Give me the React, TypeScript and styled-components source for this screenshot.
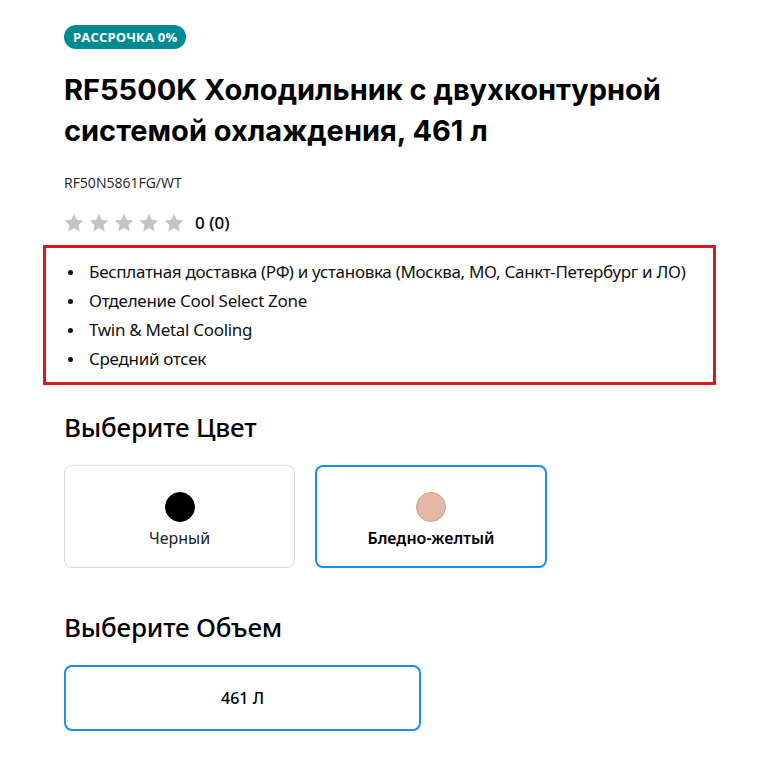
import styled, { createGlobalStyle } from 'styled-components';

const GlobalStyle = createGlobalStyle`
  html, body {
    margin: 0;
    padding: 0;
    background: #fff;
  }
  body {
    font-family: 'Open Sans', 'Noto Sans', sans-serif;
    color: #000;
  }
`;

const Page = styled.main`
  display: flex;
  flex-direction: column;
  align-items: flex-start;
  padding: 25px 66px 40px 64px;
  width: 782px;
  box-sizing: border-box;
`;

const Badge = styled.span`
  display: inline-flex;
  align-items: center;
  height: 24px;
  padding: 0 9px;
  border-radius: 12px;
  background: #008b94;
  color: #fff;
  font-family: 'Open Sans', sans-serif;
  font-weight: 700;
  font-size: 13px;
  letter-spacing: 0.2px;
`;

const Title = styled.h1`
  margin: 20px 0 0;
  font-family: 'Inter', 'Noto Sans', sans-serif;
  font-weight: 700;
  font-size: 29px;
  line-height: 41px;
  letter-spacing: 0;
`;

const Model = styled.div`
  margin-top: 22px;
  font-family: 'Open Sans', sans-serif;
  font-size: 14px;
  color: #222;
`;

const Rating = styled.div`
  display: flex;
  align-items: center;
  gap: 5px;
  margin-top: 19px;
`;

const Score = styled.span`
  margin-left: 6px;
  font-family: 'Noto Sans', sans-serif;
  font-weight: 500;
  font-size: 17px;
`;

const Highlights = styled.ul`
  align-self: stretch;
  margin: 11px 0 0 -21px;
  padding: 9px 20px 9px 39px;
  border: 3px solid #da1a1a;
  list-style: disc;
  font-family: 'Noto Sans', sans-serif;
  font-size: 17px;
  line-height: 29px;
  color: #111;
  letter-spacing: -0.3px;
`;

const Item = styled.li`
  padding-left: 4px;
  &::marker {
    font-size: 14px;
  }
`;

const SectionTitle = styled.h2<{ $gap: number }>`
  margin: ${p => p.$gap}px 0 0;
  font-family: 'Noto Sans', sans-serif;
  font-weight: 500;
  font-size: 26px;
  line-height: 34px;
  letter-spacing: -0.2px;
`;

const Options = styled.div`
  display: flex;
  gap: 20px;
  margin-top: 21px;
`;

const Option = styled.button<{ $selected?: boolean; $width: number; $height: number; $weight: number }>`
  display: flex;
  flex-direction: column;
  align-items: center;
  justify-content: center;
  gap: 5px;
  width: ${p => p.$width}px;
  height: ${p => p.$height}px;
  box-sizing: border-box;
  background: #fff;
  border: ${p => (p.$selected ? '2px solid #1a8cff' : '1px solid #dcdcdc')};
  border-radius: 8px;
  padding: 0;
  font-family: 'Noto Sans', sans-serif;
  font-size: 16px;
  font-weight: ${p => p.$weight};
  color: ${p => (p.$selected ? '#000' : '#222')};
  cursor: pointer;
`;

const Swatch = styled.span<{ $color: string; $edge: string }>`
  width: 30px;
  height: 30px;
  margin-top: 7px;
  border-radius: 50%;
  background: ${p => p.$color};
  border: 1px solid ${p => p.$edge};
  box-sizing: border-box;
`;

const Star = () => (
  <svg width="20" height="19" viewBox="0 0 24 23">
    <path
      d="M12 0.8l3.4 7.3 7.9 0.9-5.9 5.4 1.6 7.9L12 18.3 5 22.3l1.6-7.9L0.7 9l7.9-0.9z"
      fill="#c4c4c4"
    />
  </svg>
);

const highlights = [
  'Бесплатная доставка (РФ) и установка (Москва, МО, Санкт-Петербург и ЛО)',
  'Отделение Cool Select Zone',
  'Twin & Metal Cooling',
  'Средний отсек',
];

export default function App() {
  return (
    <>
      <GlobalStyle />
      <Page>
        <Badge>РАССРОЧКА 0%</Badge>
        <Title>
          RF5500K Холодильник с двухконтурной
          <br />
          системой охлаждения, 461 л
        </Title>
        <Model>RF50N5861FG/WT</Model>
        <Rating>
          {[0, 1, 2, 3, 4].map(i => (
            <Star key={i} />
          ))}
          <Score>0 (0)</Score>
        </Rating>
        <Highlights>
          {highlights.map(h => (
            <Item key={h}>{h}</Item>
          ))}
        </Highlights>

        <SectionTitle $gap={25}>Выберите Цвет</SectionTitle>
        <Options>
          <Option $width={231} $height={103} $weight={400}>
            <Swatch $color="#000" $edge="#000" />
            Черный
          </Option>
          <Option $selected $width={232} $height={103} $weight={600}>
            <Swatch $color="#e3b9a6" $edge="#c9a190" />
            Бледно-желтый
          </Option>
        </Options>

        <SectionTitle $gap={42}>Выберите Объем</SectionTitle>
        <Options>
          <Option $selected $width={357} $height={66} $weight={500}>
            461 Л
          </Option>
        </Options>
      </Page>
    </>
  );
}
